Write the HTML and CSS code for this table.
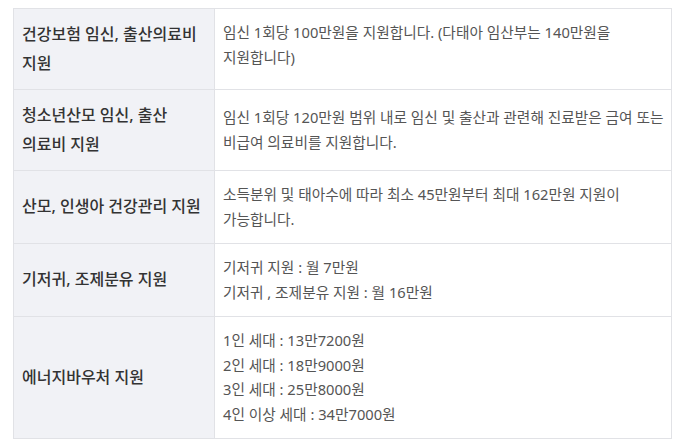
FILE: index.html
```html
<!DOCTYPE html>
<html lang="ko">
<head>
<meta charset="utf-8">
<link rel="stylesheet" href="styles.css">
</head>
<body>
<div class="wrap">
<table class="info">
  <tr>
    <th>건강보험 임신, 출산의료비 지원</th>
    <td class="top">임신 1회당 100만원을 지원합니다. (다태아 임산부는 140만원을 지원합니다)</td>
  </tr>
  <tr>
    <th>청소년산모 임신, 출산 의료비 지원</th>
    <td>임신 1회당 120만원 범위 내로 임신 및 출산과 관련해 진료받은 금여 또는 비급여 의료비를 지원합니다.</td>
  </tr>
  <tr>
    <th>산모, 인생아 건강관리 지원</th>
    <td>소득분위 및 태아수에 따라 최소 45만원부터 최대 162만원 지원이 가능합니다.</td>
  </tr>
  <tr>
    <th>기저귀, 조제분유 지원</th>
    <td>기저귀 지원 : 월 7만원<br>기저귀 , 조제분유 지원 : 월 16만원</td>
  </tr>
  <tr>
    <th>에너지바우처 지원</th>
    <td>1인 세대 : 13만7200원<br>2인 세대 : 18만9000원<br>3인 세대 : 25만8000원<br>4인 이상 세대 : 34만7000원</td>
  </tr>
</table>
</div>
</body>
</html>
```
FILE: styles.css
```css
html, body {
  margin: 0;
  padding: 0;
  background: #ffffff;
}
.wrap {
  padding: 8px 0 0 13px;
}
.info {
  width: 659px;
  border-collapse: collapse;
  table-layout: fixed;
  font-family: "Noto Sans", "Noto Sans CJK KR", sans-serif;
  word-break: keep-all;
}
.info th,
.info td {
  border: 1px solid #e1e2e6;
  padding: 11px 8px 12px 8px;
  vertical-align: middle;
  text-align: left;
}
.info th {
  width: 186px;
  padding-right: 6px;
  background: #f1f2f6;
  color: #333333;
  font-size: 16px;
  font-weight: 500;
  line-height: 28.5px;
}
.info td {
  background: #ffffff;
  color: #555555;
  font-size: 14.7px;
  font-weight: 400;
  line-height: 24.5px;
  padding-right: 5px;
}
.info td.top {
  vertical-align: top;
}
```
